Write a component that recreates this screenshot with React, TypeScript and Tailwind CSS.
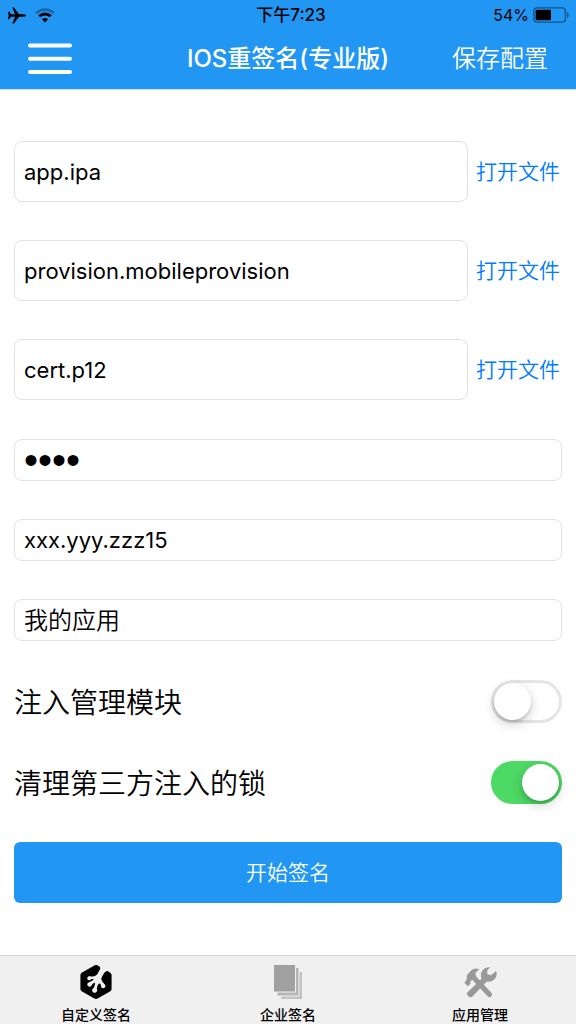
import { useState, type ReactNode } from 'react';
import { SiTreehouse } from 'react-icons/si';

function AirplaneIcon() {
  return (
    <svg viewBox="24 17 54 50" className="h-[17px] w-[18px]" fill="#000" aria-hidden="true">
      <path d="M24 31h4l5 7h12L37 18h5l15 20h16q5 1 5 4t-5 4H57L42 66h-5l8-20H33l-5 7h-4l2-11z" />
    </svg>
  );
}

function WifiIcon() {
  return (
    <svg viewBox="0 0 20 15" className="h-[15px] w-5" fill="none" aria-hidden="true">
      <path d="M1.2 5.2a12.6 12.6 0 0 1 17.6 0" stroke="#000" strokeOpacity="0.3" strokeWidth="2.6" />
      <path d="M4.2 8.300a8.4 8.4 0 0 1 11.6 0" stroke="#000" strokeWidth="2.800" />
      <path d="M7 11.300a4.200 4.200 0 0 1 6 0L10 14.400z" fill="#000" />
    </svg>
  );
}

function BatteryIcon() {
  return (
    <svg viewBox="0 0 37 16" className="h-4 w-[37px]" aria-hidden="true">
      <rect x="0.8" y="0.8" width="31.6" height="14.4" rx="3.4" fill="none" stroke="#000" strokeOpacity="0.45" strokeWidth="1.3" />
      <rect x="2.6" y="2.8" width="15.4" height="10.4" rx="1" fill="#000" />
      <path d="M34 5c2.2.6 2.2 5.400 0 6z" fill="#000" fillOpacity="0.45" />
    </svg>
  );
}

function MenuIcon() {
  return (
    <svg viewBox="0 0 44 32" className="h-8 w-11" stroke="#fff" strokeWidth="4" strokeLinecap="round" aria-hidden="true">
      <path d="M2 2.500h40M2 15.700h40M2 29h40" />
    </svg>
  );
}

function StackIcon() {
  return (
    <svg viewBox="0 0 28 34" className="h-[34px] w-7" aria-hidden="true">
      <rect x="7" y="7" width="21" height="27" fill="#c2c2c2" />
      <rect x="3" y="3" width="22.500" height="28.500" fill="#efeff0" />
      <rect x="3.500" y="3" width="21" height="27.500" fill="#b5b5b5" />
      <rect x="0" y="0" width="22" height="27.500" fill="#efeff0" />
      <rect x="0" y="0" width="21" height="26.500" fill="#a0a0a0" />
    </svg>
  );
}

function ToolsIcon() {
  return (
    <svg viewBox="68 48 100 94" className="h-[31px] w-[33px]" fill="#999" aria-hidden="true">
      <path d="M69 96l11 10 8-8-1-6 6-5 48 51q5 4 10-1t0-11L106 78l-4-9 5-8 8-6q-14-6-24 2L77 72l-1 14z" />
      <path d="M78 125l43-41q-5-15 3-26 9-11 23-9l-9 10 1 11 11 3 15-13q5 11-2 22-10 13-26 10L92 139q-5 3-9-1l-5-5q-3-4 0-8z" />
    </svg>
  );
}

const fieldClass =
  'w-full min-w-0 rounded-lg border border-[#e2e2e2] bg-white px-[9px] text-black outline-none';

function FileRow({ label, initial }: { label: string; initial: string }) {
  const [value, setValue] = useState(initial);
  return (
    <div className="flex items-center gap-2">
      <input
        type="text"
        aria-label={label}
        value={value}
        onChange={(e) => setValue(e.target.value)}
        className={`${fieldClass} h-[61px] flex-1 text-[22px]`}
      />
      <button type="button" className="shrink-0 pr-[2px] text-[21px] font-[350] text-[#007aff]">
        打开文件
      </button>
    </div>
  );
}

function Field({
  label,
  initial,
  type = 'text',
  textClass,
}: {
  label: string;
  initial: string;
  type?: string;
  textClass: string;
}) {
  const [value, setValue] = useState(initial);
  return (
    <input
      type={type}
      aria-label={label}
      value={value}
      onChange={(e) => setValue(e.target.value)}
      className={`${fieldClass} h-[42px] ${textClass}`}
    />
  );
}

function SwitchRow({ label, initial }: { label: string; initial: boolean }) {
  const [on, setOn] = useState(initial);
  return (
    <label className="flex h-[43px] items-center justify-between">
      <span className="pt-[3px] text-[28px] leading-10 font-[350]">{label}</span>
      <input
        type="checkbox"
        role="switch"
        checked={on}
        onChange={(e) => setOn(e.target.checked)}
        className="h-[43px] w-[71px] shrink-0 appearance-none rounded-full border-3 border-[#e5e5e5] bg-white before:block before:size-[37px] before:rounded-full before:bg-white before:shadow-[0_4px_12px_rgba(0,0,0,0.2),0_2px_3px_rgba(0,0,0,0.15)] checked:border-[#4cd964] checked:bg-[#4cd964] checked:before:translate-x-7"
      />
    </label>
  );
}

function Tab({ label, icon, active = false }: { label: string; icon: ReactNode; active?: boolean }) {
  return (
    <a
      href="#"
      aria-current={active ? 'page' : undefined}
      className="flex flex-1 flex-col items-center text-black"
    >
      <span className="flex h-[52px] items-center justify-center">{icon}</span>
      <span className="text-sm leading-[14px] font-medium">{label}</span>
    </a>
  );
}

export default function App() {
  return (
    <div className="flex min-h-screen flex-col bg-white font-['Inter','Noto_Sans_CJK_SC',sans-serif] text-black">
      <header className="border-b border-[#d0dfea] bg-[#2196f3]">
        <div className="grid h-[30px] grid-cols-[1fr_auto_1fr] items-center pr-[6px] pl-2 text-base">
          <div className="flex items-center gap-[9px]">
            <AirplaneIcon />
            <WifiIcon />
          </div>
          <span className="pt-[2px] pl-1 text-[17px] font-medium">下午7:23</span>
          <div className="flex items-center justify-end gap-1">
            <span>54%</span>
            <BatteryIcon />
          </div>
        </div>
        <div className="grid h-[59px] grid-cols-[1fr_auto_1fr] items-center px-7 pb-px text-2xl text-white">
          <button type="button" aria-label="菜单" className="justify-self-start">
            <MenuIcon />
          </button>
          <h1 className="text-2xl font-medium">IOS重签名(专业版)</h1>
          <button type="button" className="justify-self-end font-[350]">
            保存配置
          </button>
        </div>
      </header>

      <main className="flex flex-1 flex-col px-[14px] pt-[51px] pb-10">
        <form className="flex flex-col gap-[39px]" onSubmit={(e) => e.preventDefault()}>
          <div className="flex flex-col gap-[38px]">
            <FileRow label="应用文件" initial="app.ipa" />
            <FileRow label="描述文件" initial="provision.mobileprovision" />
            <FileRow label="证书文件" initial="cert.p12" />
          </div>
          <div className="flex flex-col gap-[38px]">
            <Field
              label="证书密码"
              type="password"
              initial="1234"
              textClass="font-['Liberation_Sans',sans-serif] text-[40px]"
            />
            <Field label="应用标识" initial="xxx.yyy.zzz15" textClass="text-[22px]" />
            <Field label="应用名称" initial="我的应用" textClass="pb-[3px] text-2xl font-[350]" />
          </div>
          <div className="flex flex-col gap-[38px]">
            <SwitchRow label="注入管理模块" initial={false} />
            <SwitchRow label="清理第三方注入的锁" initial={true} />
            <button type="submit" className="h-[61px] rounded-md bg-[#2196f3] text-[21px] font-[350] text-white">
              开始签名
            </button>
          </div>
        </form>
      </main>

      <nav className="flex h-[69px] border-t border-[#d5d5d5] bg-[#f0f0f0]">
        <Tab label="自定义签名" active icon={<SiTreehouse className="size-[34px]" />} />
        <Tab label="企业签名" icon={<StackIcon />} />
        <Tab label="应用管理" icon={<ToolsIcon />} />
      </nav>
    </div>
  );
}
